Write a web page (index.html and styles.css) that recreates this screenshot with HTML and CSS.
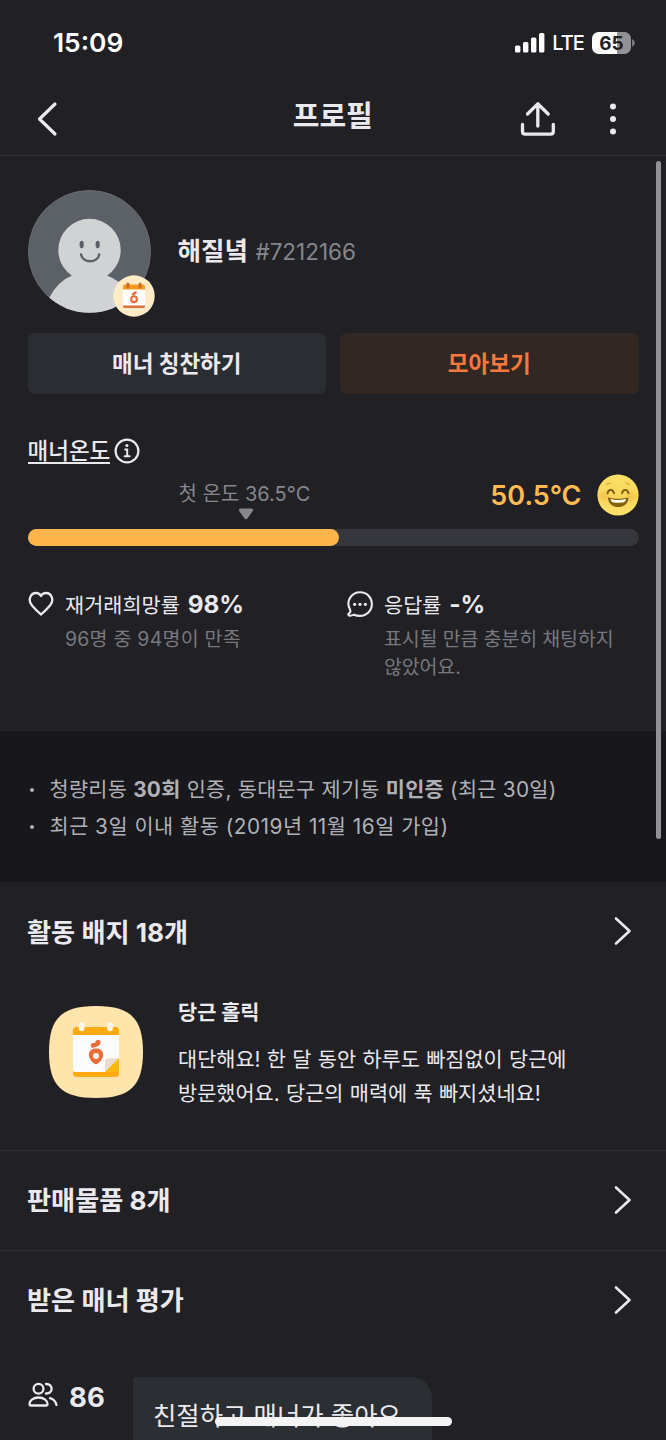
FILE: index.html
```html
<!DOCTYPE html>
<html lang="ko">
<head>
<meta charset="utf-8">
<title>프로필</title>
<link rel="stylesheet" href="styles.css">
</head>
<body>
<div class="screen">
  <div class="status">
    <span class="clock">15:09</span>
    <div class="status-right">
      <svg class="signal" width="30" height="20" viewBox="0 0 30 20" fill="#fff"><rect x="0" y="12.5" width="5.4" height="7" rx="1.6"/><rect x="8" y="9" width="5.4" height="10.500" rx="1.600"/><rect x="16" y="4.500" width="5.400" height="15" rx="1.600"/><rect x="24" y="0" width="5.400" height="19.500" rx="1.600"/></svg>
      <span class="lte">LTE</span>
      <span class="battery">65</span>
      <svg width="3" height="8" viewBox="0 0 3 8"><path d="M0 0Q3 1.500 3 4T0 8Z" fill="#77777b"/></svg>
    </div>
  </div>
  <header class="header">
    <svg class="back" width="24" height="36" viewBox="0 0 24 36"><path d="M20 3 4.500 18 20 33" fill="none" stroke="#eae9ed" stroke-width="3.200" stroke-linecap="round" stroke-linejoin="round"/></svg>
    <h1 class="title">프로필</h1>
    <div class="header-actions">
      <svg width="36" height="36" viewBox="0 0 36 36" fill="none" stroke="#eae9ed" stroke-width="3.300" stroke-linecap="round" stroke-linejoin="round"><path d="M17.800 25V3M7.500 13 17.800 2.800 28.200 13M2.500 23.500V30.500Q2.500 33.200 5.200 33.200H30.600Q33.300 33.200 33.300 30.500V23.500"/></svg>
      <svg width="8" height="36" viewBox="0 0 8 36" fill="#eae9ed"><circle cx="4" cy="5.500" r="3"/><circle cx="4" cy="18" r="3"/><circle cx="4" cy="30.500" r="3"/></svg>
    </div>
  </header>

  <main>
    <section class="profile">
      <div class="person">
        <div class="avatar">
          <svg width="123" height="123" viewBox="0 0 123 123">
            <defs><clipPath id="disc"><circle cx="61.500" cy="61.500" r="61.300"/></clipPath></defs>
            <circle cx="61.500" cy="61.500" r="61" fill="#5c6067" stroke="#6a6d72" stroke-width="1"/>
            <g clip-path="url(#disc)" fill="#d0d2d4"><circle cx="61.500" cy="60" r="31.200"/><path d="M44 85.500H79Q104 95 106 123H15L21 108Q30 91 44 85.500Z"/></g>
            <ellipse cx="53.700" cy="54.500" rx="2.100" ry="3.800" fill="#5c6067"/><ellipse cx="69.700" cy="54.500" rx="2.100" ry="3.800" fill="#5c6067"/>
            <path d="M53 64.500C55 73.500 69.500 73.500 71.200 64.500" fill="none" stroke="#5c6067" stroke-width="2.400" stroke-linecap="round"/>
          </svg>
          <svg class="avatar-badge" width="42" height="42" viewBox="0 0 42 42">
            <circle cx="21" cy="21" r="20.700" fill="#ffebc5"/>
            <rect x="10" y="11" width="22" height="22" rx="2" fill="#fff"/>
            <path d="M10 14.500V11.500Q10 9.500 12 9.500H30Q32 9.500 32 11.500V14.500Z" fill="#f79a1b"/>
            <path d="M10 30.500H32V31.500Q32 33 30 33H12Q10 33 10 31.500Z" fill="#d9713f"/>
            <path d="M14.900 9V12M27.100 9V12" stroke="#c96a2c" stroke-width="3" stroke-linecap="round"/>
            <circle cx="21" cy="24.200" r="2.900" fill="none" stroke="#ec6a39" stroke-width="2.100"/><path d="M19.500 20.600Q17.800 18.400 20.200 18Q21.500 15.500 23.400 16.600T21.500 19.800Z" fill="#ec6a39"/>
          </svg>
        </div>
        <div class="name-line"><span class="name">해질녘</span><span class="code">#7212166</span></div>
      </div>

      <div class="buttons">
        <button class="btn">매너 칭찬하기</button>
        <button class="btn btn-orange">모아보기</button>
      </div>

      <div class="temp-title">
        <span class="temp-label">매너온도</span>
        <svg width="26" height="26" viewBox="0 0 26 26" fill="none" stroke="#eae9ed" stroke-width="2.200" stroke-linecap="round"><circle cx="13" cy="13" r="11.400"/><path d="M11.200 11.600H13.200V18M10.600 18.200H15.600" stroke-width="2"/><circle cx="12.900" cy="7.600" r="1.500" fill="#eae9ed" stroke="none"/></svg>
      </div>
      <div class="temp-row">
        <div class="first-temp">
          <span>첫 온도 36.5°C</span>
          <svg width="16" height="12" viewBox="0 0 16 12"><path d="M2.500 .5H13.500Q16 .8 14.800 3L9.800 10Q8 12.500 6.200 10L1.200 3Q0 .8 2.500 .5Z" fill="#85878d"/></svg>
        </div>
        <div class="now-temp">
          <span>50.5°C</span>
          <svg width="42" height="42" viewBox="0 0 42 42">
            <defs><linearGradient id="face" x1="0" y1="0" x2="0" y2="1"><stop offset="0" stop-color="#fbe067"/><stop offset=".55" stop-color="#f8d558"/><stop offset="1" stop-color="#fbe36c"/></linearGradient>
            <radialGradient id="cheek"><stop offset="0" stop-color="#f5b849" stop-opacity=".75"/><stop offset="1" stop-color="#f5b849" stop-opacity="0"/></radialGradient></defs>
            <circle cx="21" cy="21" r="20.600" fill="url(#face)"/>
            <circle cx="8" cy="22.500" r="6.500" fill="url(#cheek)"/><circle cx="34" cy="22.500" r="6.500" fill="url(#cheek)"/>
            <g fill="none" stroke="#7c5a12" stroke-width="1.800" stroke-linecap="round"><path d="M10.500 19.300C11.500 14.800 16 14.800 17 19.300M25 19.300C26 14.800 30.500 14.800 31.500 19.300"/><path d="M10 10.500Q11.300 9 13.300 9M28.700 9Q30.700 9 32 10.500" stroke="#cda337" stroke-width="1.200"/></g>
            <path d="M11 23.500Q21 26 31.500 23.500C31.500 36.300 11 36.300 11 23.500Z" fill="#85600f"/>
            <path d="M13.500 25Q21 27 29 25Q28.500 28.200 25.500 28.600Q21 29 17 28.600Q14.200 28.200 13.500 25Z" fill="#fffdf0"/>
          </svg>
        </div>
      </div>
      <div class="bar"><div class="bar-fill"></div></div>

      <div class="stats">
        <div class="stat">
          <svg width="26" height="26" viewBox="0 0 26 26" fill="none" stroke="#eae9ed" stroke-width="2.300" stroke-linejoin="round"><path d="M13 23.500Q10.500 21.800 4 14.600C-.5 9.500 2.300 2 8 2Q11.500 2 13 5Q14.500 2 18 2C23.700 2 26.500 9.500 22 14.600Q15.500 21.800 13 23.500Z"/></svg>
          <div>
            <p class="stat-head">재거래희망률 <b>98%</b></p>
            <p class="stat-sub stat-sub-wide">96명 중 94명이 만족</p>
          </div>
        </div>
        <div class="stat">
          <svg width="26" height="26" viewBox="0 0 26 26" fill="none" stroke="#eae9ed" stroke-width="2.100" stroke-linejoin="round"><path d="M3.200 19C-2 9.500 5 1.300 13.200 1.300C20 1.300 24.900 6.500 24.900 13C24.900 19.800 19.500 24.900 13 24.900Q9.500 24.900 7 23.700Q5 24.800 2.700 24.700Q.8 24 1.500 22.900Q4 21.400 3.200 19Z"/><g fill="#eae9ed" stroke="none"><circle cx="7.600" cy="13.300" r="1.600"/><circle cx="13" cy="13.300" r="1.600"/><circle cx="18.400" cy="13.300" r="1.600"/></g></svg>
          <div>
            <p class="stat-head">응답률 <b>-%</b></p>
            <p class="stat-sub">표시될 만큼 충분히 채팅하지<br>않았어요.</p>
          </div>
        </div>
      </div>
    </section>

    <ul class="info">
      <li>청량리동 <b>30회</b> 인증, 동대문구 제기동 <b>미인증</b> (최근 30일)</li>
      <li class="joined">최근 3일 이내 활동 (2019년 11월 16일 가입)</li>
    </ul>

    <section class="badges">
      <div class="row">
        <h2>활동 배지 18개</h2>
        <svg class="chev" width="18" height="30" viewBox="0 0 18 30"><path d="M2 2.500 15.500 15 2 27.500" /></svg>
      </div>
      <div class="badge">
        <svg width="94" height="92" viewBox="0 0 94 92">
          <path d="M47 0C81 0 94 12 94 46S81 92 47 92S0 80 0 46S13 0 47 0Z" fill="#ffe5ab"/>
          <rect x="24" y="21" width="46" height="50" rx="3.500" fill="#ffaa10"/>
          <path d="M24 29H70V52L56 66H26Q24 66 24 64Z" fill="#fdfcfc"/>
          <path d="M70 52L56 66V55Q56 52.500 58.500 52.500Z" fill="#eadbd0"/>
          <path d="M70 52 56 66H70Z" fill="#ffb813"/>
          <path d="M32.700 19V22.500M61 19V22.500" stroke="#fff8ea" stroke-width="5.600" stroke-linecap="round"/>
          <path d="M47 42.500C56.500 42.500 56.500 53.500 47 58.500C37.500 53.500 37.500 42.500 47 42.500Z" fill="#ec6b38"/>
          <circle cx="47" cy="50" r="2.900" fill="#fff"/>
          <path d="M43 42C40 38.500 43 36.600 45.800 37.200C47 32.500 51.800 32.700 51.500 36.800C51 39.800 47.500 41 43 42Z" fill="#ec6b38"/>
        </svg>
        <div class="badge-copy">
          <h3>당근 홀릭</h3>
          <p>대단해요! 한 달 동안 하루도 빠짐없이 당근에<br>방문했어요. 당근의 매력에 푹 빠지셨네요!</p>
        </div>
      </div>
    </section>

    <section class="row row-line">
      <h2>판매물품 8개</h2>
      <svg class="chev" width="18" height="30" viewBox="0 0 18 30"><path d="M2 2.500 15.500 15 2 27.500" /></svg>
    </section>
    <section class="row row-line">
      <h2>받은 매너 평가</h2>
      <svg class="chev" width="18" height="30" viewBox="0 0 18 30"><path d="M2 2.500 15.500 15 2 27.500" /></svg>
    </section>
    <div class="review">
      <svg width="30" height="26" viewBox="0 0 30 26" fill="none" stroke="#eae9ed" stroke-width="2.300" stroke-linecap="round" stroke-linejoin="round"><circle cx="10.500" cy="6.800" r="4.900"/><path d="M18 2C25.500 1.500 25.500 12 18 11.500M10.500 15.500C15.500 15.500 19.500 18.500 19.500 22Q19.500 23.500 18 23.500H3Q1.500 23.500 1.500 22C1.500 18.500 5.500 15.500 10.500 15.500ZM22 16.200Q27 17.500 28.500 23"/></svg>
      <span class="count">86</span>
      <div class="bubble">친절하고 매너가 좋아요.</div>
    </div>
  </main>
  <div class="scrollbar"></div>
  <div class="home"></div>
</div>
</body>
</html>
```
FILE: styles.css
```css
* { box-sizing: border-box; margin: 0; padding: 0; }
body {
  background: #212024;
  color: #eae9ed;
  font-family: Inter, "Noto Sans CJK KR", sans-serif;
}
svg { display: block; flex: none; }
.screen { position: relative; width: 666px; height: 1440px; overflow: hidden; white-space: nowrap; }

.status { display: flex; justify-content: space-between; height: 86px; padding: 0 31px 0 53px; align-items: center; }
.clock { font-size: 26.300px; font-weight: 600; color: #fff; line-height: 30px; }
.status-right { display: flex; align-items: center; }
.lte { margin-left: 7px; font-size: 20px; font-weight: 500; color: #fff; letter-spacing: -.9px; }
.battery {
  margin-left: 8px; margin-right: 1px; width: 39px; height: 22px; border-radius: 6.500px;
  background: linear-gradient(90deg, #fff 65%, #929295 65%);
  color: #212024; font-size: 19px; font-weight: 700; line-height: 23px; text-align: center;
}

.header { display: grid; grid-template-columns: 1fr auto 1fr; align-items: center; height: 70px; padding: 0 49px 4px 34.500px; border-bottom: 1px solid #38373c; }
.title { font-size: 29px; font-weight: 700; line-height: 40px; padding: 0 0 3px; margin: 0 -7px 0 7px; }
.header-actions { display: flex; justify-content: flex-end; gap: 53px; }

.profile { height: 575px; padding: 34px 27px 0 27.500px; border-bottom: 1px solid #26262a; }
.person { display: flex; gap: 27px; align-items: center; height: 123px; }
.avatar { position: relative; }
.avatar svg { margin-top: -1px; }
.avatar-badge { position: absolute; left: 85px; top: 85px; }
.name-line { display: flex; align-items: baseline; gap: 7.500px; padding-bottom: 6px; }
.name { font-size: 25.500px; font-weight: 700; }
.code { font-size: 22.500px; color: #85878d; }

.buttons { display: grid; grid-template-columns: 1fr 1fr; gap: 14px; margin-top: 20px; width: 611px; }
.btn { height: 61px; border: 0; border-radius: 7px; background: #2a2e32; color: #eae9ed; font: 700 22.500px/60px Inter, "Noto Sans CJK KR", sans-serif; }
.btn-orange { background: #332723; color: #f5793e; }

.temp-title { display: flex; align-items: center; gap: 4px; height: 36px; margin-top: 39px; }
.temp-label { font-size: 22.500px; font-weight: 500; line-height: 26px; height: 26px; border-bottom: 2px solid #eae9ed; }
.temp-row { display: flex; justify-content: space-between; height: 59px; width: 611px; padding-left: 151px; }
.first-temp { display: flex; flex-direction: column; color: #85878d; font-size: 20px; line-height: 28px; padding-top: 11px; }
.first-temp svg { margin: 0 0 0 59px; }
.now-temp { display: flex; gap: 15px; height: 42px; margin-top: 5px; align-items: center; color: #ffba54; font-size: 27px; font-weight: 600; }
.bar { width: 611px; height: 17px; margin-top: 1px; border-radius: 9px; background: #36373d; }
.bar-fill { width: 51%; height: 17px; border-radius: 9px; background: #ffb54c; }

.stats { display: grid; grid-template-columns: 319px 1fr; margin-top: 41px; }
.stat { display: flex; gap: 11.500px; }
.stat svg { margin-top: 4px; }
.stat-head { font-size: 20.800px; line-height: 34px; }
.stat-head b { margin-left: 2px; font-size: 24.300px; font-weight: 700; }
.stat-sub { color: #77797f; font-size: 19.500px; line-height: 28px; margin-top: 2px; letter-spacing: -.15px; }
.stat-sub-wide { letter-spacing: .22px; }

.info { height: 151px; padding: 40px 28px 0; background: #18171b; color: #b0b1b6; list-style: none; font-size: 20.800px; line-height: 37px; }
.info li { display: flex; white-space: pre; letter-spacing: .26px; }
.info .joined { letter-spacing: .5px; }
.info li::before { content: ""; width: 4px; height: 4px; margin: 17px 15.500px 0 2px; border-radius: 50%; background: #b0b1b6; }

.row { display: flex; justify-content: space-between; align-items: center; height: 100px; padding: 0 34px 2px 27px; }
.row-line { border-top: 1px solid #303034; }
h2 { font-size: 26.200px; font-weight: 700; padding-bottom: 1px; }
.chev path { fill: none; stroke: #eae9ed; stroke-width: 2.600; stroke-linecap: round; stroke-linejoin: round; }
.badges { height: 268px; }
.badge { display: flex; gap: 35px; padding: 12px 49px; }
.badge svg { margin-top: 12px; }
h3 { font-size: 20.800px; font-weight: 700; line-height: 34px; padding-top: 2px; }
.badge-copy p { font-size: 20.800px; line-height: 34px; margin-top: 13px; word-spacing: .5px; }
.review { display: flex; padding: 27px 0 0 28px; }
.review svg { margin-top: 5px; }
.count { width: 64px; margin-left: 11px; font-size: 27.500px; font-weight: 700; line-height: 40px; }
.bubble { width: 299px; height: 90px; padding: 20px; border-radius: 4px 21px 21px 21px; background: #2b2e32; font-size: 25.400px; line-height: 38px; }

.scrollbar { position: absolute; left: 656px; top: 161px; width: 5px; height: 678px; border-radius: 3px; background: #929195; }
.home { position: absolute; left: 215px; top: 1417px; width: 237px; height: 9px; border-radius: 5px; background: #f4f4f5; }
```
